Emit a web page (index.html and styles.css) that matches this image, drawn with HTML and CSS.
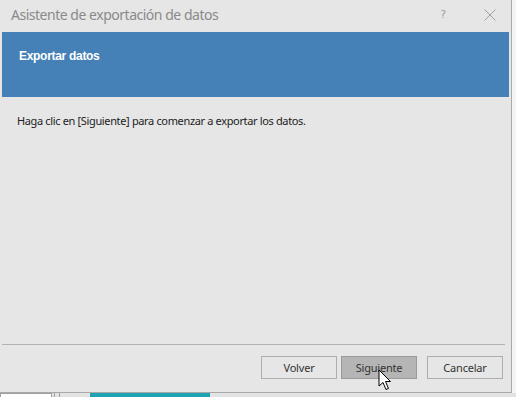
FILE: index.html
```html
<!DOCTYPE html>
<html>
<head>
<meta charset="utf-8">
<link rel="stylesheet" href="styles.css">
</head>
<body>
<div class="screen">
  <div class="dialog">
    <div class="titlebar">
      <span class="title">Asistente de exportación de datos</span>
      <span class="help">?</span>
      <svg class="close" width="12" height="12" viewBox="0 0 12 12"><path d="M0.5 0.5L11.5 11.5M11.5 0.5L0.5 11.5" stroke="#a0a0a0" stroke-width="1"/></svg>
    </div>
    <div class="banner">Exportar datos</div>
    <div class="content">Haga clic en [Siguiente] para comenzar a exportar los datos.</div>
    <div class="footer">
      <button class="btn">Volver</button>
      <button class="btn hover">Siguiente</button>
      <button class="btn cancel">Cancelar</button>
      <svg class="cursor" width="14" height="22" viewBox="0 0 14 22"><path d="M1 1L1 17L5 13.5L8 20.5L10.5 19.5L7.5 12.5L12.5 12.5Z" fill="#fff" stroke="#000" stroke-width="1" stroke-linejoin="round"/></svg>
    </div>
  </div>
  <div class="taskbar">
    <div class="tb-box"></div>
    <div class="tb-sep"></div>
    <div class="tb-sep2"></div>
    <div class="tb-active"></div>
  </div>
</div>
</body>
</html>
```
FILE: styles.css
```css
html, body { margin: 0; padding: 0; }
body { width: 516px; height: 397px; overflow: hidden; background: #f4f4f4; font-family: "Segoe UI", "Open Sans", "DejaVu Sans", sans-serif; }
.screen { width: 516px; height: 397px; position: relative; }
.dialog {
  width: 512px; height: 393px; box-sizing: border-box;
  background: #e6e6e6;
  border-right: 1px solid #a9a9a9;
  border-bottom: 1px solid #a9a9a9;
  display: flex; flex-direction: column;
  padding: 0 2px 0 2px;
  position: relative;
}
.titlebar { height: 32px; box-sizing: border-box; display: flex; align-items: center; padding-left: 9px; padding-bottom: 3px; }
.title { font-family: "Noto Sans", "Open Sans", sans-serif; font-size: 14px; color: #8a8a8a; flex: 1; letter-spacing: -0.48px; }
.help { font-family: "DejaVu Sans", sans-serif; font-size: 11px; color: #a0a0a0; margin-right: 38px; }
.close { margin-right: 13px; }
.banner {
  height: 65px; background: #4581b6; color: #fff; box-sizing: border-box;
  padding: 17px 0 0 17px; font-family: "Liberation Sans", Arial, sans-serif; font-weight: bold; font-size: 12px;
  letter-spacing: -0.3px;
}
.content { flex: 1; padding: 16px 0 0 15px; font-family: "Noto Sans", "Open Sans", sans-serif; font-size: 11px; color: #222; letter-spacing: -0.35px; }
.footer {
  height: 48px; border-top: 1px solid #b2b2b2; margin-right: 4px;
  display: flex; align-items: flex-start; padding-top: 11px; padding-left: 259px; box-sizing: border-box;
  position: relative;
}
.btn {
  width: 76px; height: 23px; box-sizing: border-box; background: #e6e6e6; border: 1px solid #adadad;
  font-family: "Noto Sans", "Open Sans", sans-serif; font-size: 11px; color: #333; padding: 0; margin: 0;
  letter-spacing: -0.2px;
}
.btn + .btn { margin-left: 4px; }
.btn.hover { background: #b5b5b5; border-color: #9a9a9a; }
.btn.cancel { margin-left: 10px; }
.cursor { position: absolute; left: 376px; top: 24px; }
.taskbar { position: absolute; left: 0; top: 393px; width: 516px; height: 4px; background: #e2e2e2; }
.tb-box { position: absolute; left: 0; top: 0; width: 52px; height: 4px; background: #fff; border: 1px solid #a0a0a0; box-sizing: border-box; border-bottom: none; }
.tb-sep { position: absolute; left: 54px; top: 0; width: 1px; height: 4px; background: #a0a0a0; }
.tb-sep2 { position: absolute; left: 59px; top: 0; width: 1px; height: 4px; background: #a0a0a0; }
.tb-active { position: absolute; left: 90px; top: 0; width: 120px; height: 4px; background: #1fa2b2; }
```
